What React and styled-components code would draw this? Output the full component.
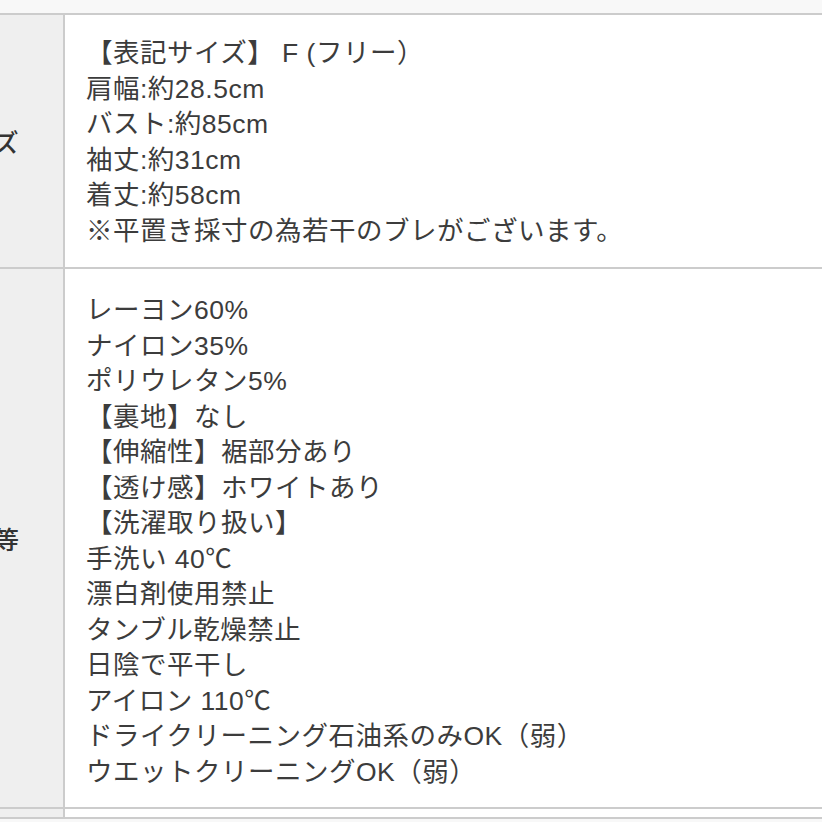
import React from 'react';
import styled, { createGlobalStyle } from 'styled-components';

const GlobalStyle = createGlobalStyle`
  html, body {
    margin: 0;
    padding: 0;
    background: #ffffff;
    overflow: hidden;
  }
  body {
    font-family: "Liberation Sans", "Noto Sans CJK JP", sans-serif;
    color: #333333;
  }
`;

const Page = styled.div`
  width: 822px;
  height: 822px;
  overflow: hidden;
  background: #f8f8f8;
  padding-top: 13px;
  box-sizing: border-box;
`;

const Table = styled.div`
  margin-left: -100px;
  border-top: 2px solid #cccccc;
  background: #ffffff;
`;

const Row = styled.div`
  display: grid;
  grid-template-columns: 165px 1fr;
  border-bottom: 2px solid #cccccc;
  min-height: ${p => p.$minHeight || 0}px;
`;

const Label = styled.div`
  background: #efefef;
  border-right: 2px solid #cccccc;
  display: flex;
  align-items: center;
  justify-content: center;
  font-family: "Noto Sans CJK JP", sans-serif;
  font-size: 25px;
  font-weight: 500;
  color: #333333;
`;

const Body = styled.div`
  padding: ${p => p.$padTop}px 20px ${p => p.$padBottom}px 21px;
  font-size: 26.5px;
  line-height: 35.5px;
  letter-spacing: 0.5px;
  color: #3c3c3c;
`;

const Line = styled.div`
  white-space: nowrap;
`;

const sizeLines = [
  '【表記サイズ】 F (フリー）',
  '肩幅:約28.5cm',
  'バスト:約85cm',
  '袖丈:約31cm',
  '着丈:約58cm',
  '※平置き採寸の為若干のブレがございます。',
];

const materialLines = [
  'レーヨン60%',
  'ナイロン35%',
  'ポリウレタン5%',
  '【裏地】なし',
  '【伸縮性】裾部分あり',
  '【透け感】ホワイトあり',
  '【洗濯取り扱い】',
  '手洗い 40℃',
  '漂白剤使用禁止',
  'タンブル乾燥禁止',
  '日陰で平干し',
  'アイロン 110℃',
  'ドライクリーニング石油系のみOK（弱）',
  'ウエットクリーニングOK（弱）',
];

export default function App() {
  return (
    <>
      <GlobalStyle />
      <Page>
        <Table>
          <Row>
            <Label>サイズ</Label>
            <Body $padTop={21} $padBottom={18}>
              {sizeLines.map((l, i) => <Line key={i}>{l}</Line>)}
            </Body>
          </Row>
          <Row>
            <Label>素材等</Label>
            <Body $padTop={24} $padBottom={17}>
              {materialLines.map((l, i) => <Line key={i}>{l}</Line>)}
            </Body>
          </Row>
          <Row $minHeight={8}>
            <Label />
            <div />
          </Row>
        </Table>
      </Page>
    </>
  );
}
